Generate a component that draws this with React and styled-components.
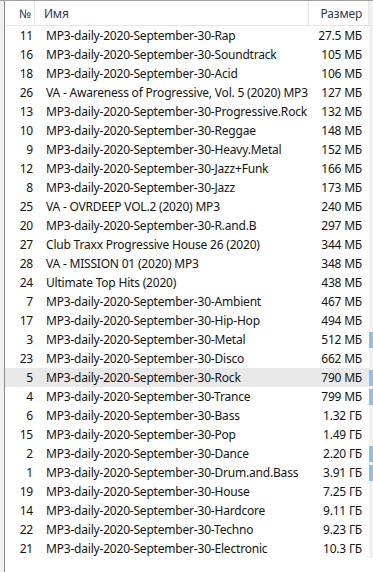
import React from "react";
import styled, { createGlobalStyle } from "styled-components";

const Global = createGlobalStyle`
  html, body { margin: 0; padding: 0; background: #ffffff; }
  body { font-family: "Noto Sans", "Segoe UI", Arial, sans-serif; }
`;

const rows = [
  ["11", "MP3-daily-2020-September-30-Rap", "27.5 МБ"],
  ["16", "MP3-daily-2020-September-30-Soundtrack", "105 МБ"],
  ["18", "MP3-daily-2020-September-30-Acid", "106 МБ"],
  ["26", "VA - Awareness of Progressive, Vol. 5 (2020) MP3", "127 МБ"],
  ["13", "MP3-daily-2020-September-30-Progressive.Rock", "132 МБ"],
  ["10", "MP3-daily-2020-September-30-Reggae", "148 МБ"],
  ["9", "MP3-daily-2020-September-30-Heavy.Metal", "152 МБ"],
  ["12", "MP3-daily-2020-September-30-Jazz+Funk", "166 МБ"],
  ["8", "MP3-daily-2020-September-30-Jazz", "173 МБ"],
  ["25", "VA - OVRDEEP VOL.2 (2020) MP3", "240 МБ"],
  ["20", "MP3-daily-2020-September-30-R.and.B", "297 МБ"],
  ["27", "Club Traxx Progressive House 26 (2020)", "344 МБ"],
  ["28", "VA - MISSION 01 (2020) MP3", "348 МБ"],
  ["24", "Ultimate Top Hits (2020)", "438 МБ"],
  ["7", "MP3-daily-2020-September-30-Ambient", "467 МБ"],
  ["17", "MP3-daily-2020-September-30-Hip-Hop", "494 МБ"],
  ["3", "MP3-daily-2020-September-30-Metal", "512 МБ", true],
  ["23", "MP3-daily-2020-September-30-Disco", "662 МБ"],
  ["5", "MP3-daily-2020-September-30-Rock", "790 МБ", true, true],
  ["4", "MP3-daily-2020-September-30-Trance", "799 МБ", true],
  ["6", "MP3-daily-2020-September-30-Bass", "1.32 ГБ"],
  ["15", "MP3-daily-2020-September-30-Pop", "1.49 ГБ"],
  ["2", "MP3-daily-2020-September-30-Dance", "2.20 ГБ", true],
  ["1", "MP3-daily-2020-September-30-Drum.and.Bass", "3.91 ГБ", true],
  ["19", "MP3-daily-2020-September-30-House", "7.25 ГБ"],
  ["14", "MP3-daily-2020-September-30-Hardcore", "9.11 ГБ"],
  ["22", "MP3-daily-2020-September-30-Techno", "9.23 ГБ"],
  ["21", "MP3-daily-2020-September-30-Electronic", "10.3 ГБ"],
];

const Frame = styled.div`
  width: 373px;
  height: 572px;
  display: flex;
  overflow: hidden;
  border-top: 1px solid #a0a0a0;
  box-sizing: border-box;
`;

const Gutter = styled.div`
  width: 4px;
  flex: none;
  background: #f0f0f0;
  border-right: 1px solid #8a8a8a;
`;

const List = styled.div`
  flex: 1;
  display: flex;
  flex-direction: column;
  background: #ffffff;
`;

const cols = "30px 274px 60px 4px";

const Header = styled.div`
  display: grid;
  grid-template-columns: ${cols};
  height: 24px;
  border-bottom: 1px solid #e5e5e5;
  font-size: 12px;
  letter-spacing: -0.2px;
  color: #2c3b57;
`;

const HeadCell = styled.div`
  display: flex;
  align-items: center;
  justify-content: ${(p) => (p.$right ? "flex-end" : "flex-start")};
  padding: ${(p) => p.$pad};
  border-right: ${(p) => (p.$noDivider ? "none" : "1px solid #e5e5e5")};
  background: ${(p) => (p.$strip ? "#f0f0f0" : "transparent")};
  box-sizing: border-box;
  white-space: nowrap;
`;

const Row = styled.div`
  display: grid;
  grid-template-columns: ${cols};
  height: 19px;
  font-size: 12px;
  letter-spacing: -0.2px;
  color: #141414;
  background: ${(p) => (p.$hl ? "#e9e9e9" : "transparent")};
`;

const Cell = styled.div`
  display: flex;
  align-items: center;
  justify-content: ${(p) => (p.$right ? "flex-end" : "flex-start")};
  padding: ${(p) => p.$pad};
  white-space: nowrap;
  overflow: hidden;
  box-sizing: border-box;
`;

const Strip = styled.div`
  background: #f0f0f0;
  display: flex;
  align-items: center;
`;

const Mark = styled.div`
  width: 4px;
  height: 16px;
  background: ${(p) => (p.$on ? "#8cc0ec" : "transparent")};
`;

export default function App() {
  return (
    <>
      <Global />
      <Frame>
        <Gutter />
        <List>
          <Header>
            <HeadCell $right $pad="0 3px 0 0">№</HeadCell>
            <HeadCell $pad="0 0 0 9px">Имя</HeadCell>
            <HeadCell $right $pad="0 6px 0 0">Размер</HeadCell>
            <HeadCell $strip $noDivider />
          </Header>
          {rows.map(([n, name, size, mark, hl]) => (
            <Row key={n} $hl={hl}>
              <Cell $right $pad="0 2px 0 0">{n}</Cell>
              <Cell $pad="0 0 0 11px">{name}</Cell>
              <Cell $right $pad="0 7px 0 0">{size}</Cell>
              <Strip>
                <Mark $on={mark} />
              </Strip>
            </Row>
          ))}
        </List>
      </Frame>
    </>
  );
}
